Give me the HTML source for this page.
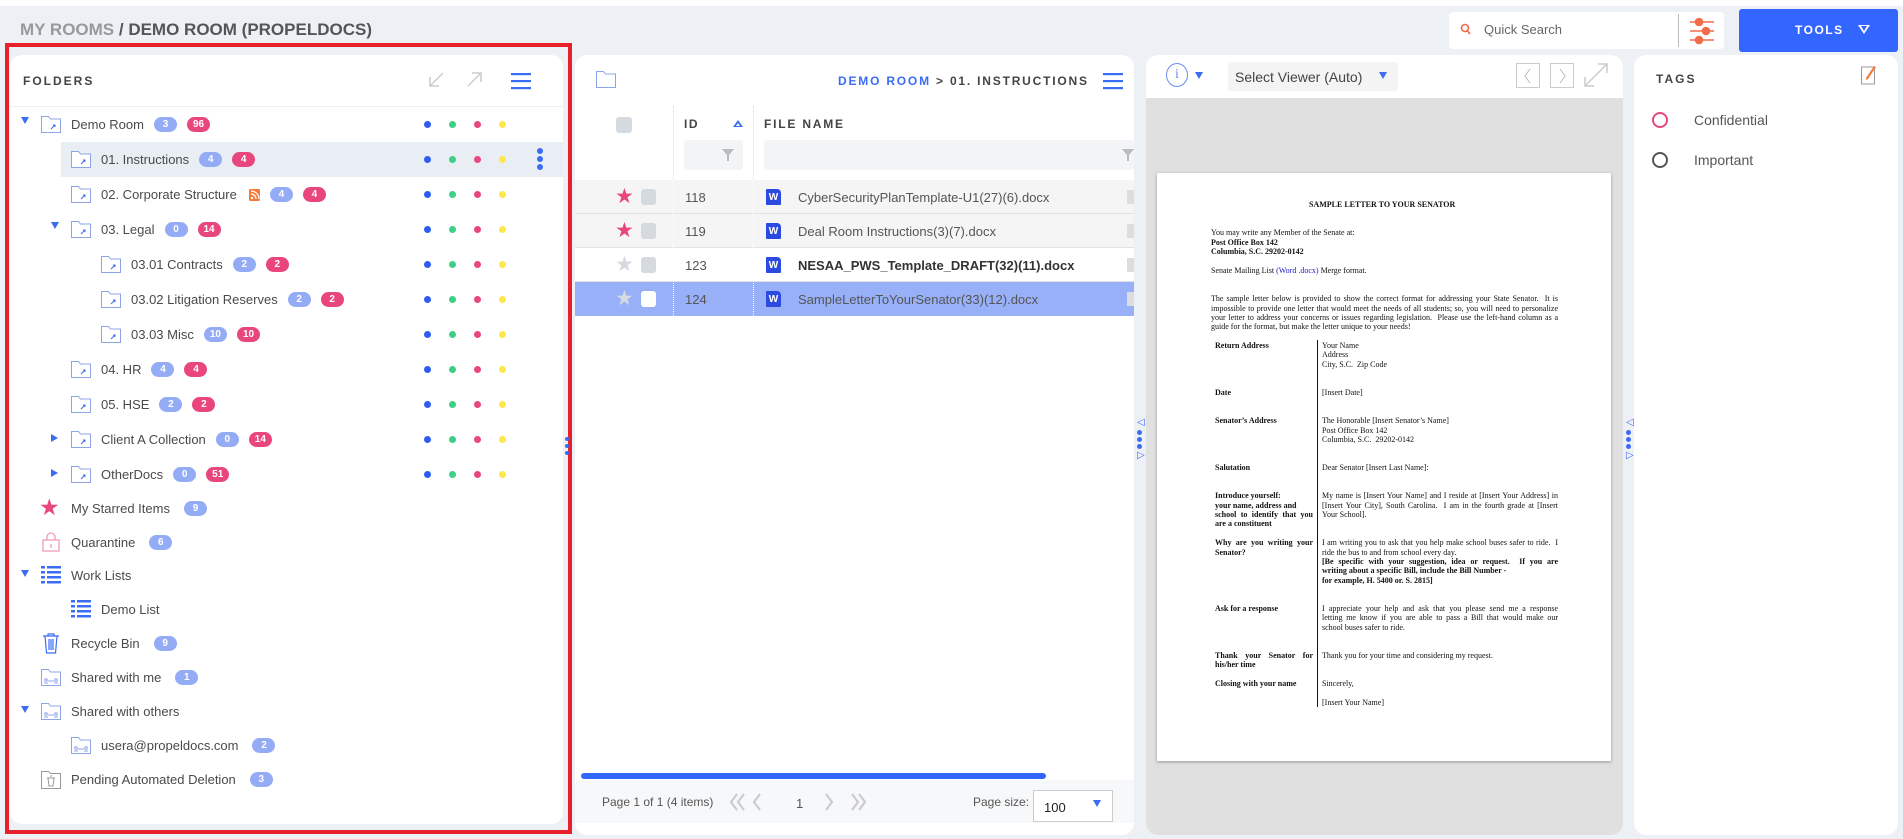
<!DOCTYPE html>
<html><head><meta charset="utf-8"><style>
*{box-sizing:border-box;margin:0;padding:0}
body{width:1903px;height:839px;background:#edf1f5;font-family:"Liberation Sans",sans-serif;position:relative;overflow:hidden;color:#444}
.a{position:absolute}
.panel{position:absolute;background:#fff;border-radius:12px}
.row{position:absolute;height:35px;display:flex;align-items:center;font-size:13px;color:#4a4a4a}
.b{display:inline-block;height:15px;min-width:23px;padding:0 6px;border-radius:8px;font-size:10px;font-weight:bold;color:#fff;text-align:center;line-height:15px;margin-left:10px}
.bl{background:#94acf6}.pk{background:#e8467d}
.dot{position:absolute;width:7px;height:7px;border-radius:50%}
.tri{position:absolute;width:0;height:0}
.doc div{position:absolute;font-family:"Liberation Serif",serif;font-size:8px;color:#111;white-space:nowrap;line-height:9px}
.doc .bd{font-weight:bold}
.j{text-align:justify;text-align-last:justify;white-space:normal!important}
.pg{position:absolute;font-size:26px;color:#ccc;line-height:26px}
</style></head><body>
<div class="a" style="left:0;top:0;width:1903px;height:6px;background:#fff"></div>
<div class="a" style="left:20px;top:20px;font-size:17px;font-weight:bold;color:#999">MY ROOMS <span style="color:#555">/ DEMO ROOM (PROPELDOCS)</span></div>

<!-- search -->
<div class="a" style="left:1449px;top:12px;width:275px;height:37px;background:#fff;border-radius:4px"></div>
<svg class="a" style="left:1460px;top:23px" width="12" height="14"><circle cx="5" cy="5" r="3.5" fill="none" stroke="#f26b4a" stroke-width="1.6"/><line x1="7.5" y1="8" x2="10" y2="11" stroke="#f26b4a" stroke-width="1.6"/></svg>
<div class="a" style="left:1484px;top:22px;font-size:13px;color:#666">Quick Search</div>
<div class="a" style="left:1678px;top:14px;width:1px;height:33px;background:#bbb"></div>
<svg class="a" style="left:1688px;top:16px" width="28" height="30" stroke="#f26b4a" fill="#f26b4a" stroke-width="1.6"><line x1="2" y1="6" x2="26" y2="6"/><line x1="2" y1="15" x2="26" y2="15"/><line x1="2" y1="24" x2="26" y2="24"/><circle cx="11" cy="6" r="3.5"/><circle cx="18" cy="15" r="3.5"/><circle cx="11" cy="24" r="3.5"/></svg>
<div class="a" style="left:1739px;top:9px;width:159px;height:43px;background:#3366ff;border-radius:3px"></div>
<div class="a" style="left:1795px;top:23px;font-size:12px;font-weight:bold;color:#fff;letter-spacing:1.5px">TOOLS</div>
<div class="tri" style="left:1858px;top:25px;border-left:6px solid transparent;border-right:6px solid transparent;border-top:9px solid #fff"></div>
<div class="tri" style="left:1861px;top:26px;border-left:3px solid transparent;border-right:3px solid transparent;border-top:5px solid #3366ff"></div>

<!-- folders panel -->
<div class="panel" style="left:10px;top:55px;width:553px;height:769px"></div>
<div class="a" style="left:5px;top:43px;width:567px;height:791px;border:4px solid #e8202a"></div>
<div class="a" style="left:23px;top:74px;font-size:12px;font-weight:bold;letter-spacing:2px;color:#444">FOLDERS</div>
<svg class="a" style="left:427px;top:70px" width="20" height="20" stroke="#ccc" stroke-width="1.5" fill="none"><path d="M16 3L3 16M3 7v9h9"/></svg>
<svg class="a" style="left:465px;top:70px" width="20" height="20" stroke="#ccc" stroke-width="1.5" fill="none"><path d="M3 16L16 3M7 3h9v9"/></svg>
<svg class="a" style="left:511px;top:72px" width="20" height="18" fill="#3b6cf4"><rect y="1" width="20" height="2.2"/><rect y="8" width="20" height="2.2"/><rect y="15" width="20" height="2.2"/></svg>
<div class="a" style="left:10px;top:106px;width:553px;height:1px;background:#eceff3"></div>
<div class="a" style="left:61px;top:142px;width:502px;height:35px;background:#e9edf4"></div>

<svg width="0" height="0" style="position:absolute"><defs>
<symbol id="fold" viewBox="0 0 20 18"><path d="M0.5 1.5h7l2 2.5h10v13.5h-19z" fill="#fff" stroke="#8fa4e8"/><path d="M10 14l4-4M12 10h2v2" stroke="#3b6cf4" stroke-width="1" fill="none"/></symbol>
<symbol id="sfold" viewBox="0 0 20 18"><path d="M0.5 1.5h7l2 2.5h10v13.5h-19z" fill="#fff" stroke="#8fa4e8"/><circle cx="5" cy="12" r="1.3" fill="none" stroke="#8fa4e8"/><circle cx="15" cy="12" r="1.3" fill="none" stroke="#8fa4e8"/><path d="M3 15h4M13 15h4M7 13h6" stroke="#8fa4e8"/></symbol>
</defs></svg>

<div class="tri" style="left:21px;top:117px;border-left:4px solid transparent;border-right:4px solid transparent;border-top:7px solid #3b6cf4"></div>
<svg class="a" style="left:41px;top:115px" width="20" height="18"><use href="#fold"/></svg>
<div class="row" style="left:71px;top:107px">Demo Room<span class="b bl">3</span><span class="b pk">96</span></div>

<svg class="a" style="left:71px;top:150px" width="20" height="18"><use href="#fold"/></svg>
<div class="row" style="left:101px;top:142px">01. Instructions<span class="b bl">4</span><span class="b pk">4</span></div>
<div class="dot" style="left:537px;top:148px;background:#3b6cf4;width:6px;height:6px"></div>
<div class="dot" style="left:537px;top:156px;background:#3b6cf4;width:6px;height:6px"></div>
<div class="dot" style="left:537px;top:164px;background:#3b6cf4;width:6px;height:6px"></div>

<svg class="a" style="left:71px;top:185px" width="20" height="18"><use href="#fold"/></svg>
<div class="row" style="left:101px;top:177px">02. Corporate Structure<svg style="margin-left:12px" width="11" height="12"><rect width="11" height="12" rx="1.5" fill="#f47a3c"/><circle cx="3" cy="9" r="1.2" fill="#fff"/><path d="M2 5a5 5 0 0 1 5 5M2 2a8 8 0 0 1 8 8" stroke="#fff" stroke-width="1.3" fill="none"/></svg><span class="b bl">4</span><span class="b pk">4</span></div>

<div class="tri" style="left:51px;top:222px;border-left:4px solid transparent;border-right:4px solid transparent;border-top:7px solid #3b6cf4"></div>
<svg class="a" style="left:71px;top:220px" width="20" height="18"><use href="#fold"/></svg>
<div class="row" style="left:101px;top:212px">03. Legal<span class="b bl">0</span><span class="b pk">14</span></div>

<svg class="a" style="left:101px;top:255px" width="20" height="18"><use href="#fold"/></svg>
<div class="row" style="left:131px;top:247px">03.01 Contracts<span class="b bl">2</span><span class="b pk">2</span></div>
<svg class="a" style="left:101px;top:290px" width="20" height="18"><use href="#fold"/></svg>
<div class="row" style="left:131px;top:282px">03.02 Litigation Reserves<span class="b bl">2</span><span class="b pk">2</span></div>
<svg class="a" style="left:101px;top:325px" width="20" height="18"><use href="#fold"/></svg>
<div class="row" style="left:131px;top:317px">03.03 Misc<span class="b bl">10</span><span class="b pk">10</span></div>
<svg class="a" style="left:71px;top:360px" width="20" height="18"><use href="#fold"/></svg>
<div class="row" style="left:101px;top:352px">04. HR<span class="b bl">4</span><span class="b pk">4</span></div>
<svg class="a" style="left:71px;top:395px" width="20" height="18"><use href="#fold"/></svg>
<div class="row" style="left:101px;top:387px">05. HSE<span class="b bl">2</span><span class="b pk">2</span></div>
<div class="tri" style="left:51px;top:434px;border-top:4px solid transparent;border-bottom:4px solid transparent;border-left:7px solid #3b6cf4"></div>
<svg class="a" style="left:71px;top:430px" width="20" height="18"><use href="#fold"/></svg>
<div class="row" style="left:101px;top:422px">Client A Collection<span class="b bl">0</span><span class="b pk">14</span></div>
<div class="tri" style="left:51px;top:469px;border-top:4px solid transparent;border-bottom:4px solid transparent;border-left:7px solid #3b6cf4"></div>
<svg class="a" style="left:71px;top:465px" width="20" height="18"><use href="#fold"/></svg>
<div class="row" style="left:101px;top:457px">OtherDocs<span class="b bl">0</span><span class="b pk">51</span></div>

<div class="a" style="left:39px;top:495px;font-size:23px;color:#e8467d;line-height:24px">★</div>
<div class="row" style="left:71px;top:491px">My Starred Items<span class="b bl" style="margin-left:14px">9</span></div>
<svg class="a" style="left:41px;top:532px" width="20" height="20" fill="none" stroke="#f29ab8" stroke-width="1.3"><rect x="2" y="8" width="16" height="11"/><path d="M6 8V5a4 4 0 0 1 8 0v3"/><path d="M10 12v4"/></svg>
<div class="row" style="left:71px;top:525px">Quarantine<span class="b bl" style="margin-left:14px">6</span></div>
<div class="tri" style="left:21px;top:570px;border-left:4px solid transparent;border-right:4px solid transparent;border-top:7px solid #3b6cf4"></div>
<svg class="a" style="left:41px;top:566px" width="20" height="18" fill="#3b6cf4"><rect y="0" width="4" height="2.5"/><rect x="6" y="0" width="14" height="2.5"/><rect y="5" width="4" height="2.5"/><rect x="6" y="5" width="14" height="2.5"/><rect y="10" width="4" height="2.5"/><rect x="6" y="10" width="14" height="2.5"/><rect y="15" width="4" height="2.5"/><rect x="6" y="15" width="14" height="2.5"/></svg>
<div class="row" style="left:71px;top:558px">Work Lists</div>
<svg class="a" style="left:71px;top:600px" width="20" height="18" fill="#3b6cf4"><rect y="0" width="4" height="2.5"/><rect x="6" y="0" width="14" height="2.5"/><rect y="5" width="4" height="2.5"/><rect x="6" y="5" width="14" height="2.5"/><rect y="10" width="4" height="2.5"/><rect x="6" y="10" width="14" height="2.5"/><rect y="15" width="4" height="2.5"/><rect x="6" y="15" width="14" height="2.5"/></svg>
<div class="row" style="left:101px;top:592px">Demo List</div>
<svg class="a" style="left:41px;top:633px" width="20" height="21" fill="none" stroke="#3b6cf4" stroke-width="1.2"><path d="M2 3h16M7 3V1h6v2M4 3l1.5 17h9L16 3M8 6v11M10 6v11M12 6v11"/></svg>
<div class="row" style="left:71px;top:626px">Recycle Bin<span class="b bl" style="margin-left:14px">9</span></div>
<svg class="a" style="left:41px;top:668px" width="20" height="18"><use href="#sfold"/></svg>
<div class="row" style="left:71px;top:660px">Shared with me<span class="b bl" style="margin-left:14px">1</span></div>
<div class="tri" style="left:21px;top:706px;border-left:4px solid transparent;border-right:4px solid transparent;border-top:7px solid #3b6cf4"></div>
<svg class="a" style="left:41px;top:702px" width="20" height="18"><use href="#sfold"/></svg>
<div class="row" style="left:71px;top:694px">Shared with others</div>
<svg class="a" style="left:71px;top:736px" width="20" height="18"><use href="#sfold"/></svg>
<div class="row" style="left:101px;top:728px">usera@propeldocs.com<span class="b bl" style="margin-left:14px">2</span></div>
<svg class="a" style="left:41px;top:769px" width="20" height="20" fill="none" stroke="#999" stroke-width="1"><path d="M0.5 2.5h7l2 2h10v15h-19z"/><path d="M6 9h8M7 9l1 8h4l1-8M9 7h2"/></svg>
<div class="row" style="left:71px;top:762px">Pending Automated Deletion<span class="b bl" style="margin-left:14px">3</span></div>

<div id="dots"></div>
<script>
var ys=[124,159,194,229,264,299,334,369,404,439,474],xs=[427,452,477,502],cs=["#2f5cf0","#3ccf85","#e8467d","#fde74c"],h="";
ys.forEach(function(y){xs.forEach(function(x,i){h+='<div class="dot" style="left:'+(x-3)+'px;top:'+(y-3)+'px;background:'+cs[i]+'"></div>'})});
document.getElementById("dots").innerHTML=h;
</script>

<!-- files panel -->
<div class="panel" style="left:575px;top:55px;width:559px;height:780px"></div>
<svg class="a" style="left:596px;top:70px" width="20" height="18"><path d="M0.5 1.5h7l2 2.5h10v13.5h-19z" fill="#fff" stroke="#8fa4e8"/></svg>
<div class="a" style="left:838px;top:74px;font-size:12px;font-weight:bold;letter-spacing:1.8px;color:#444"><span style="color:#3b6cf4">DEMO ROOM</span> &gt; 01. INSTRUCTIONS</div>
<svg class="a" style="left:1103px;top:72px" width="20" height="18" fill="#3b6cf4"><rect y="1" width="20" height="2.2"/><rect y="8" width="20" height="2.2"/><rect y="15" width="20" height="2.2"/></svg>
<div class="a" style="left:616px;top:117px;width:16px;height:16px;border-radius:3px;background:#d5d9e0"></div>
<div class="a" style="left:684px;top:117px;font-size:12px;font-weight:bold;letter-spacing:1.5px;color:#444">ID</div>
<div class="tri" style="left:733px;top:120px;border-left:5px solid transparent;border-right:5px solid transparent;border-bottom:7px solid #3b6cf4"></div>
<div class="tri" style="left:735.5px;top:123px;border-left:2.5px solid transparent;border-right:2.5px solid transparent;border-bottom:3px solid #fff"></div>
<div class="a" style="left:764px;top:117px;font-size:12px;font-weight:bold;letter-spacing:1.8px;color:#444">FILE NAME</div>
<div class="a" style="left:684px;top:140px;width:59px;height:30px;background:#f3f4f6;border-radius:3px"></div>
<div class="a" style="left:764px;top:140px;width:370px;height:30px;background:#f3f4f6;border-radius:3px"></div>
<svg class="a" style="left:722px;top:149px" width="12" height="12" fill="#bbb"><path d="M0 0h12L7 6v6H5V6z"/></svg>
<svg class="a" style="left:1122px;top:149px" width="12" height="12" fill="#bbb"><path d="M0 0h12L7 6v6H5V6z"/></svg>
<div class="a" style="left:673px;top:106px;width:1px;height:210px;border-left:1px dotted #ddd"></div>
<div class="a" style="left:753px;top:106px;width:1px;height:210px;border-left:1px dotted #ddd"></div>

<div class="a" style="left:575px;top:180px;width:559px;height:34px;background:#f5f5f5;border-bottom:1px solid #e2e2e2"></div>
<div class="a" style="left:575px;top:214px;width:559px;height:34px;background:#f5f5f5;border-bottom:1px solid #e2e2e2"></div>
<div class="a" style="left:575px;top:248px;width:559px;height:34px;background:#fff;border-bottom:1px solid #e2e2e2"></div>
<div class="a" style="left:575px;top:282px;width:559px;height:34px;background:#97b0f8"></div>
<div class="a" style="left:673px;top:180px;height:136px;border-left:1px dotted #fff"></div>
<div class="a" style="left:753px;top:180px;height:136px;border-left:1px dotted #fff"></div>

<div id="frows"></div>
<script>
var rows=[[180,"#e8467d","#d5d9e0","118","CyberSecurityPlanTemplate-U1(27)(6).docx",0],[214,"#e8467d","#d5d9e0","119","Deal Room Instructions(3)(7).docx",0],[248,"#d5d9e0","#d5d9e0","123","NESAA_PWS_Template_DRAFT(32)(11).docx",1],[282,"#d5d9e0","#fff","124","SampleLetterToYourSenator(33)(12).docx",0]],s="";
rows.forEach(function(r){var y=r[0];
s+='<div class="a" style="left:615px;top:'+(y+5)+'px;font-size:21px;line-height:24px;color:'+r[1]+'">★</div>';
s+='<div class="a" style="left:641px;top:'+(y+9)+'px;width:15px;height:16px;border-radius:3px;background:'+r[2]+'"></div>';
s+='<div class="a" style="left:685px;top:'+(y+10)+'px;font-size:13px;color:#555">'+r[3]+'</div>';
s+='<div class="a" style="left:766px;top:'+(y+9)+'px;width:15px;height:16px;background:#2b4be0;border-radius:1px 4px 1px 1px;color:#fff;font-size:10px;font-weight:bold;text-align:center;line-height:18px">W</div>';
s+='<div class="a" style="left:798px;top:'+(y+10)+'px;font-size:13px;color:'+(r[5]?'#333':'#555')+';font-weight:'+(r[5]?'bold':'normal')+'">'+r[4]+'</div>';
s+='<div class="a" style="left:1127px;top:'+(y+10)+'px;width:7px;height:14px;background:#ddd"></div>';});
document.getElementById("frows").innerHTML=s;
</script>

<div class="a" style="left:581px;top:773px;width:465px;height:6px;background:#3366ff;border-radius:3px"></div>
<div class="a" style="left:575px;top:780px;width:559px;height:43px;background:#f7f8fa"></div>
<div class="a" style="left:602px;top:795px;font-size:12px;color:#555">Page 1 of 1 (4 items)</div>
<svg class="a" style="left:728px;top:791px" width="90" height="22" fill="none" stroke="#ccc" stroke-width="2.2"><path d="M9 3L3 11l6 8M16 3l-6 8 6 8M32 3l-6 8 6 8"/></svg>
<div class="a" style="left:796px;top:796px;font-size:13px;color:#555">1</div>
<svg class="a" style="left:822px;top:791px" width="60" height="22" fill="none" stroke="#ccc" stroke-width="2.2"><path d="M4 3l6 8-6 8M30 3l6 8-6 8M37 3l6 8-6 8"/></svg>
<div class="a" style="left:973px;top:795px;font-size:12px;color:#555">Page size:</div>
<div class="a" style="left:1033px;top:790px;width:80px;height:32px;border:1px solid #ccc;background:#fff"></div>
<div class="a" style="left:1044px;top:800px;font-size:13px;color:#222">100</div>
<div class="tri" style="left:1093px;top:800px;border-left:4px solid transparent;border-right:4px solid transparent;border-top:7px solid #3b6cf4"></div>

<!-- splitters -->
<div class="a" style="left:565px;top:425px;width:5px;height:40px"><div style="width:4px;height:4px;border-radius:50%;background:#3b6cf4;margin:12px 0 3px"></div><div style="width:4px;height:4px;border-radius:50%;background:#3b6cf4;margin-bottom:3px"></div><div style="width:4px;height:4px;border-radius:50%;background:#3b6cf4"></div></div>
<div class="a" style="left:1137px;top:418px;width:8px;height:56px"><div style="font-size:10px;color:#3b6cf4;line-height:10px">◁</div><div style="width:5px;height:5px;border-radius:50%;background:#3b6cf4;margin:2px 0"></div><div style="width:5px;height:5px;border-radius:50%;background:#3b6cf4;margin:2px 0"></div><div style="width:5px;height:5px;border-radius:50%;background:#3b6cf4;margin:2px 0"></div><div style="font-size:10px;color:#3b6cf4;line-height:10px">▷</div></div>
<div class="a" style="left:1626px;top:418px;width:8px;height:56px"><div style="font-size:10px;color:#3b6cf4;line-height:10px">◁</div><div style="width:5px;height:5px;border-radius:50%;background:#3b6cf4;margin:2px 0"></div><div style="width:5px;height:5px;border-radius:50%;background:#3b6cf4;margin:2px 0"></div><div style="width:5px;height:5px;border-radius:50%;background:#3b6cf4;margin:2px 0"></div><div style="font-size:10px;color:#3b6cf4;line-height:10px">▷</div></div>

<!-- viewer -->
<div class="panel" style="left:1146px;top:55px;width:477px;height:780px;background:#e0e0e0;overflow:hidden"><div style="height:43px;background:#fff"></div></div>
<div class="a" style="left:1166px;top:63px;width:22px;height:24px;border:1px solid #6b8cf0;border-radius:50%;color:#6b8cf0;font-size:14px;text-align:center;line-height:22px;font-family:'Liberation Serif',serif">i</div>
<div class="tri" style="left:1195px;top:72px;border-left:4px solid transparent;border-right:4px solid transparent;border-top:7px solid #3b6cf4"></div>
<div class="a" style="left:1228px;top:62px;width:170px;height:29px;background:#f4f4f4;border-radius:3px"></div>
<div class="a" style="left:1235px;top:69px;font-size:14px;color:#444">Select Viewer (Auto)</div>
<div class="tri" style="left:1379px;top:72px;border-left:4px solid transparent;border-right:4px solid transparent;border-top:7px solid #3b6cf4"></div>
<svg class="a" style="left:1516px;top:63px" width="60" height="26" fill="none"><rect x="0.5" y="0.5" width="23" height="24" stroke="#ccc"/><rect x="34.5" y="0.5" width="23" height="24" stroke="#ccc"/><path d="M14 6l-5 7 5 7M44 6l5 7-5 7" stroke="#bbb"/></svg>
<svg class="a" style="left:1583px;top:62px" width="26" height="26" stroke="#ccc" stroke-width="1.5" fill="none"><path d="M2 24L24 2M15 2h9v9M2 15v9h9"/></svg>

<div class="a" style="left:1157px;top:173px;width:454px;height:588px;background:#fff;box-shadow:0 1px 3px rgba(0,0,0,.35)"></div>
<div class="doc">
<div class="bd" style="left:1309px;top:200px">SAMPLE LETTER TO YOUR SENATOR</div>
<div style="left:1211px;top:228px">You may write any Member of the Senate at:</div>
<div class="bd" style="left:1211px;top:238px">Post Office Box 142</div>
<div class="bd" style="left:1211px;top:247px">Columbia, S.C. 29202-0142</div>
<div style="left:1211px;top:266px">Senate Mailing List <span style="color:#22c">(Word .docx)</span> Merge format.</div>
<div class="j" style="left:1211px;top:294px;width:347px">The sample letter below is provided to show the correct format for addressing your State Senator.&nbsp; It is</div>
<div class="j" style="left:1211px;top:304px;width:347px">impossible to provide one letter that would meet the needs of all students; so, you will need to personalize</div>
<div class="j" style="left:1211px;top:313px;width:347px">your letter to address your concerns or issues regarding legislation.&nbsp; Please use the left-hand column as a</div>
<div style="left:1211px;top:322px">guide for the format, but make the letter unique to your needs!</div>
<div class="bd" style="left:1215px;top:341px">Return Address</div>
<div style="left:1322px;top:341px">Your Name</div><div style="left:1322px;top:350px">Address</div><div style="left:1322px;top:360px">City, S.C.&nbsp; Zip Code</div>
<div class="bd" style="left:1215px;top:388px">Date</div><div style="left:1322px;top:388px">[Insert Date]</div>
<div class="bd" style="left:1215px;top:416px">Senator’s Address</div>
<div style="left:1322px;top:416px">The Honorable [Insert Senator’s Name]</div><div style="left:1322px;top:426px">Post Office Box 142</div><div style="left:1322px;top:435px">Columbia, S.C.&nbsp; 29202-0142</div>
<div class="bd" style="left:1215px;top:463px">Salutation</div><div style="left:1322px;top:463px">Dear Senator [Insert Last Name]:</div>
<div class="bd" style="left:1215px;top:491px">Introduce yourself:</div>
<div class="bd" style="left:1215px;top:501px">your name, address and</div>
<div class="bd j" style="left:1215px;top:510px;width:98px">school to identify that you</div>
<div class="bd" style="left:1215px;top:519px">are a constituent</div>
<div class="j" style="left:1322px;top:491px;width:236px">My name is [Insert Your Name] and I reside at [Insert Your Address] in</div>
<div class="j" style="left:1322px;top:501px;width:236px">[Insert Your City], South Carolina.&nbsp; I am in the fourth grade at [Insert</div>
<div style="left:1322px;top:510px">Your School].</div>
<div class="bd j" style="left:1215px;top:538px;width:98px">Why are you writing your</div>
<div class="bd" style="left:1215px;top:548px">Senator?</div>
<div class="j" style="left:1322px;top:538px;width:236px">I am writing you to ask that you help make school buses safer to ride.&nbsp; I</div>
<div style="left:1322px;top:548px">ride the bus to and from school every day.</div>
<div class="bd j" style="left:1322px;top:557px;width:236px">[Be specific with your suggestion, idea or request.&nbsp; If you are</div>
<div class="bd" style="left:1322px;top:566px">writing about a specific Bill, include the Bill Number -</div>
<div class="bd" style="left:1322px;top:576px">for example, H. 5400 or. S. 2815]</div>
<div class="bd" style="left:1215px;top:604px">Ask for a response</div>
<div class="j" style="left:1322px;top:604px;width:236px">I appreciate your help and ask that you please send me a response</div>
<div class="j" style="left:1322px;top:613px;width:236px">letting me know if you are able to pass a Bill that would make our</div>
<div style="left:1322px;top:623px">school buses safer to ride.</div>
<div class="bd j" style="left:1215px;top:651px;width:98px">Thank your Senator for</div>
<div class="bd" style="left:1215px;top:660px">his/her time</div>
<div style="left:1322px;top:651px">Thank you for your time and considering my request.</div>
<div class="bd" style="left:1215px;top:679px">Closing with your name</div>
<div style="left:1322px;top:679px">Sincerely,</div>
<div style="left:1322px;top:698px">[Insert Your Name]</div>
</div>
<div class="a" style="left:1317px;top:340px;width:1px;height:367px;background:#111"></div>

<!-- tags -->
<div class="panel" style="left:1634px;top:55px;width:264px;height:780px"></div>
<div class="a" style="left:1656px;top:72px;font-size:12px;font-weight:bold;letter-spacing:2px;color:#444">TAGS</div>
<svg class="a" style="left:1861px;top:63px" width="15" height="22" fill="none"><rect x="0.5" y="4" width="13" height="17" stroke="#999"/><path d="M5 15l8-12 2 1-8 12-2 1z" fill="#f47a3c"/></svg>
<div class="a" style="left:1652px;top:112px;width:16px;height:16px;border:2px solid #e8467d;border-radius:50%"></div>
<div class="a" style="left:1694px;top:112px;font-size:14px;color:#555">Confidential</div>
<div class="a" style="left:1652px;top:152px;width:16px;height:16px;border:2px solid #555;border-radius:50%"></div>
<div class="a" style="left:1694px;top:152px;font-size:14px;color:#555">Important</div>
</body></html>
